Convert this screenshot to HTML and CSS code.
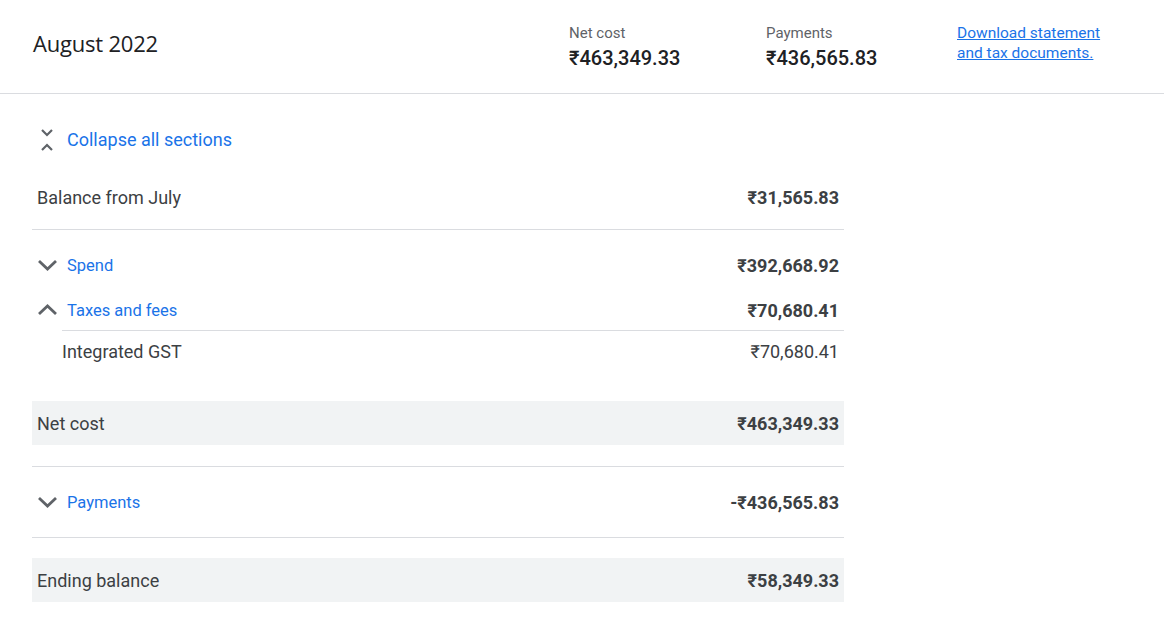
FILE: index.html
```html
<!DOCTYPE html>
<html>
<head>
<meta charset="utf-8">
<link rel="stylesheet" href="styles.css">
</head>
<body>
<header class="topbar">
  <h1 class="title">August 2022</h1>
  <div class="stats">
    <div class="stat stat-net">
      <div class="stat-label">Net cost</div>
      <div class="stat-value">₹463,349.33</div>
    </div>
    <div class="stat stat-pay">
      <div class="stat-label">Payments</div>
      <div class="stat-value">₹436,565.83</div>
    </div>
    <a class="download" href="#">Download statement and tax documents.</a>
  </div>
</header>
<main class="content">
  <div class="collapse-all">
    <svg class="unfold" viewBox="0 0 16 22" width="16" height="22"><polyline points="3,1 8,6 13,1" /><polyline points="3,21 8,16 13,21" /></svg>
    <span>Collapse all sections</span>
  </div>
  <div class="table">
    <div class="row row-balance">
      <span class="label">Balance from July</span>
      <span class="amount">₹31,565.83</span>
    </div>
    <div class="group">
      <div class="row row-sec row-spend">
        <span class="sec-label"><svg class="chev" viewBox="0 0 21 12" width="21" height="12"><polyline points="2,2 10.5,10 19,2"/></svg><span class="link">Spend</span></span>
        <span class="amount">₹392,668.92</span>
      </div>
      <div class="row row-sec row-taxes">
        <span class="sec-label"><svg class="chev" viewBox="0 0 21 12" width="21" height="12"><polyline points="2,10 10.5,2 19,10"/></svg><span class="link">Taxes and fees</span></span>
        <span class="amount">₹70,680.41</span>
      </div>
      <div class="row row-sub">
        <span class="label">Integrated GST</span>
        <span class="amount-plain">₹70,680.41</span>
      </div>
    </div>
    <div class="row row-total row-net">
      <span class="label">Net cost</span>
      <span class="amount">₹463,349.33</span>
    </div>
    <div class="row row-sec row-payments">
      <span class="sec-label"><svg class="chev" viewBox="0 0 21 12" width="21" height="12"><polyline points="2,2 10.5,10 19,2"/></svg><span class="link">Payments</span></span>
      <span class="amount">-₹436,565.83</span>
    </div>
    <div class="row row-total row-end">
      <span class="label">Ending balance</span>
      <span class="amount">₹58,349.33</span>
    </div>
  </div>
</main>
</body>
</html>
```
FILE: styles.css
```css
* { box-sizing: border-box; }
html, body { margin: 0; padding: 0; background: #fff; }
body {
  font-family: Roboto, "Liberation Sans", Arial, sans-serif;
  color: #3c4043;
}
.topbar {
  height: 94px;
  border-bottom: 1px solid #dadce0;
  display: flex;
  align-items: flex-start;
}
.title {
  margin: 0;
  padding: 29px 0 0 33px;
  font-family: "Open Sans", "Noto Sans", sans-serif;
  font-weight: 400;
  font-size: 22px;
  line-height: 28px;
  color: #202124;
  letter-spacing: -0.2px;
}
.stats {
  margin-left: auto;
  display: flex;
  padding-top: 23px;
}
.stat { display: flex; flex-direction: column; }
.stat-net { width: 197px; }
.stat-pay { width: 191px; }
.stat-label {
  font-size: 15px;
  line-height: 20px;
  color: #5f6368;
}
.stat-value {
  font-size: 20px;
  line-height: 26px;
  font-weight: 500;
  color: #202124;
  margin-top: 2px;
}
.download {
  width: 158px;
  margin-right: 49px;
  font-size: 15.5px;
  line-height: 20px;
  color: #1a73e8;
  text-decoration: underline;
}
.content {
  padding-left: 32px;
}
.collapse-all {
  margin-top: 30px;
  height: 30px;
  display: flex;
  align-items: center;
  color: #1a73e8;
  font-size: 18px;
}
.unfold {
  margin-left: 7px;
  margin-right: 12px;
  margin-top: 1px;
  fill: none;
  stroke: #5f6368;
  stroke-width: 2.2;
}
.table { width: 812px; margin-top: 11px; }
.row {
  display: flex;
  align-items: center;
  justify-content: space-between;
  padding: 0 5px;
  font-size: 18px;
}
.label { color: #3c4043; }
.amount { font-weight: 700; color: #3c4043; }
.amount-plain { color: #3c4043; }
.row-balance { height: 65px; border-bottom: 1px solid #dadce0; }
.group { padding-top: 20px; }
.row-sec { height: 30px; }
.row-taxes { margin-top: 15px; margin-bottom: 5px; }
.sec-label { display: flex; align-items: center; }
.chev {
  fill: none;
  stroke: #5f6368;
  stroke-width: 2.8;
  margin-right: 9px;
}
.link { color: #1a73e8; font-size: 16.5px; }
.row-sub {
  margin-left: 30px;
  padding-left: 0;
  height: 41px;
  border-top: 1px solid #dadce0;
}
.row-total { height: 44px; background: #f1f3f4; }
.row-net { margin-top: 30px; }
.row-payments {
  height: 72px;
  margin-top: 21px;
  border-top: 1px solid #dadce0;
  border-bottom: 1px solid #dadce0;
}
.row-end { margin-top: 20px; }
```
